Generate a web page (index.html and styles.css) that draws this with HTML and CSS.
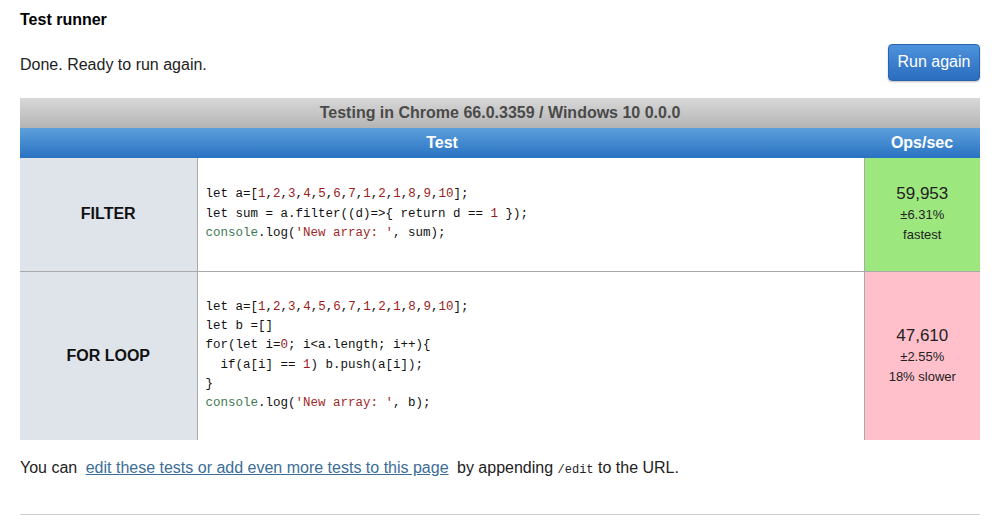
FILE: index.html
```html
<!DOCTYPE html>
<html>
<head>
<meta charset="utf-8">
<link rel="stylesheet" href="styles.css">
</head>
<body>
<div class="page">
  <h1 class="title">Test runner</h1>
  <div class="status-row">
    <span class="status">Done. Ready to run again.</span>
    <button class="run-btn">Run again</button>
  </div>
  <table class="results">
    <colgroup>
      <col class="col-name">
      <col class="col-code">
      <col class="col-ops">
    </colgroup>
    <thead>
      <tr class="ua-row"><th colspan="3">Testing in Chrome 66.0.3359 / Windows 10 0.0.0</th></tr>
      <tr class="col-row"><th colspan="2">Test</th><th>Ops/sec</th></tr>
    </thead>
    <tbody>
      <tr class="row-1">
        <th class="name">FILTER</th>
        <td class="code"><div class="src">
          <div class="ln"><span class="k">let</span> a=[<span class="n">1</span>,<span class="n">2</span>,<span class="n">3</span>,<span class="n">4</span>,<span class="n">5</span>,<span class="n">6</span>,<span class="n">7</span>,<span class="n">1</span>,<span class="n">2</span>,<span class="n">1</span>,<span class="n">8</span>,<span class="n">9</span>,<span class="n">10</span>];</div>
          <div class="ln"><span class="k">let</span> sum = a.filter((d)=&gt;{ <span class="k">return</span> d == <span class="n">1</span> });</div>
          <div class="ln"><span class="f">console</span>.log(<span class="s">'New array: '</span>, sum);</div>
        </div></td>
        <td class="ops fastest"><span class="num">59,953</span><span class="err">±6.31%</span><span class="rel">fastest</span></td>
      </tr>
      <tr class="row-2">
        <th class="name">FOR LOOP</th>
        <td class="code"><div class="src">
          <div class="ln"><span class="k">let</span> a=[<span class="n">1</span>,<span class="n">2</span>,<span class="n">3</span>,<span class="n">4</span>,<span class="n">5</span>,<span class="n">6</span>,<span class="n">7</span>,<span class="n">1</span>,<span class="n">2</span>,<span class="n">1</span>,<span class="n">8</span>,<span class="n">9</span>,<span class="n">10</span>];</div>
          <div class="ln"><span class="k">let</span> b =[]</div>
          <div class="ln"><span class="k">for</span>(<span class="k">let</span> i=<span class="n">0</span>; i&lt;a.length; i++){</div>
          <div class="ln indent"><span class="k">if</span>(a[i] == <span class="n">1</span>) b.push(a[i]);</div>
          <div class="ln">}</div>
          <div class="ln"><span class="f">console</span>.log(<span class="s">'New array: '</span>, b);</div>
        </div></td>
        <td class="ops slower"><span class="num">47,610</span><span class="err">±2.55%</span><span class="rel">18% slower</span></td>
      </tr>
    </tbody>
  </table>
  <p class="footer-note">You can <a href="#" class="edit-link">edit these tests or add even more tests to this page</a> by appending <code>/edit</code> to the URL.</p>
  <hr class="rule">
</div>
</body>
</html>
```
FILE: styles.css
```css
html, body {
  margin: 0;
  padding: 0;
  background: #fff;
}
body {
  font-family: "Liberation Sans", Arial, sans-serif;
  color: #111;
}
.page {
  width: 960px;
  margin-left: 20px;
  padding-top: 11px;
}
.title {
  margin: 0;
  font-size: 16px;
  line-height: 18px;
  font-weight: bold;
  color: #000;
}
.status-row {
  display: flex;
  justify-content: space-between;
  align-items: center;
  margin-top: 15px;
  height: 37px;
}
.status {
  font-size: 16px;
  line-height: 20px;
  padding-top: 5px;
  color: #222;
}
.run-btn {
  width: 92px;
  height: 37px;
  border: 1px solid #2a63a8;
  border-radius: 4px;
  background: linear-gradient(#4d93dc, #2b6cbf);
  color: #fff;
  font-family: "Liberation Sans", Arial, sans-serif;
  font-size: 16px;
  padding: 0 0 1px 0;
  box-shadow: 0 1px 2px rgba(0,0,0,0.25);
}
.results {
  margin-top: 17px;
  width: 960px;
  border-collapse: collapse;
  table-layout: fixed;
}
.col-name { width: 177px; }
.col-code { width: 667px; }
.col-ops { width: 116px; }
.results th, .results td {
  padding: 0;
}
.ua-row th {
  height: 30px;
  background: linear-gradient(#d8d8d8, #b4b4b4);
  color: #4a4a4a;
  font-size: 16px;
  font-weight: bold;
  text-align: center;
}
.col-row th {
  height: 30px;
  background: linear-gradient(#5c9fdc, #2a72c2);
  color: #fff;
  font-size: 16px;
  font-weight: bold;
  text-align: center;
}
.row-1 {
  height: 113px;
  border-bottom: 1px solid #a9a9a9;
}
.row-2 {
  height: 169px;
}
.name {
  background: #dfe4ea;
  border-right: 1px solid #a9a9a9;
  font-size: 16px;
  font-weight: bold;
  color: #111;
  text-align: center;
  vertical-align: middle;
}
.code {
  background: #fff;
  border-right: 1px solid #a9a9a9;
  vertical-align: middle;
}
.src {
  padding: 0 8px;
  font-family: "Liberation Mono", "DejaVu Sans Mono", monospace;
  font-size: 12.5px;
  line-height: 19.3px;
  color: #111;
}
.ln {
  white-space: pre;
}
.ln.indent {
  padding-left: 15px;
}
.k { color: #111; }
.n { color: #9a1c1c; }
.f { color: #3f7a55; }
.s { color: #a02a2a; }
.ops {
  text-align: center;
  vertical-align: middle;
  color: #222;
}
.ops span {
  display: block;
}
.ops .num {
  font-size: 17px;
  line-height: 22px;
}
.ops .err, .ops .rel {
  font-size: 13px;
  line-height: 20px;
}
.fastest { background: #9de87e; }
.slower { background: #ffc0cb; }
.footer-note {
  margin: 18px 0 0 0;
  font-size: 16px;
  line-height: 20px;
  color: #222;
}
.edit-link {
  color: #3b6d97;
  text-decoration: underline;
  margin: 0 4px;
}
.footer-note code {
  font-family: "Liberation Mono", "DejaVu Sans Mono", monospace;
  font-size: 12px;
}
.rule {
  margin: 34px 0 0 0;
  border: 0;
  border-top: 1px solid #cfcfcf;
  height: 0;
}
```
